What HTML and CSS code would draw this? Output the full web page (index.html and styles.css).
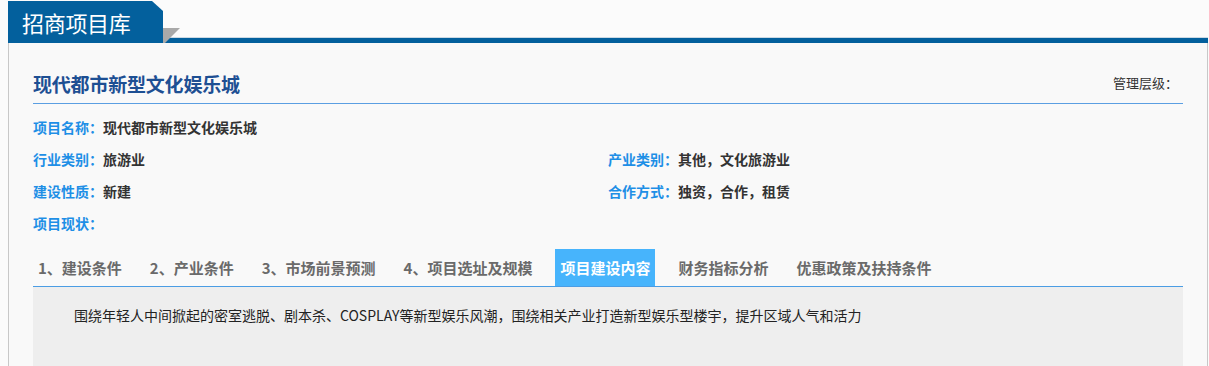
FILE: index.html
```html
<!DOCTYPE html>
<html lang="zh-CN">
<head>
<meta charset="utf-8">
<title>招商项目库</title>
<link rel="stylesheet" href="styles.css">
</head>
<body>
<div class="header">
  <div class="header-tab">招商项目库</div>
  <div class="header-line"></div>
  <svg class="header-fold" width="18" height="16" viewBox="0 0 18 16"><polygon points="0,1 17,1 2,16 0,16" fill="#a9a9a9"/></svg>
</div>
<div class="panel">
  <div class="title-row">
    <h1 class="title">现代都市新型文化娱乐城</h1>
    <span class="level">管理层级：</span>
  </div>
  <div class="info">
    <div class="field full"><span class="label">项目名称：</span><span class="value">现代都市新型文化娱乐城</span></div>
    <div class="field"><span class="label">行业类别：</span><span class="value">旅游业</span></div>
    <div class="field"><span class="label">产业类别：</span><span class="value">其他，文化旅游业</span></div>
    <div class="field"><span class="label">建设性质：</span><span class="value">新建</span></div>
    <div class="field"><span class="label">合作方式：</span><span class="value">独资，合作，租赁</span></div>
    <div class="field full"><span class="label">项目现状：</span><span class="value"></span></div>
  </div>
  <div class="tabs">
    <span class="tab">1、建设条件</span>
    <span class="tab">2、产业条件</span>
    <span class="tab">3、市场前景预测</span>
    <span class="tab">4、项目选址及规模</span>
    <span class="tab active">项目建设内容</span>
    <span class="tab">财务指标分析</span>
    <span class="tab">优惠政策及扶持条件</span>
  </div>
  <div class="content">围绕年轻人中间掀起的密室逃脱、剧本杀、COSPLAY等新型娱乐风潮，围绕相关产业打造新型娱乐型楼宇，提升区域人气和活力</div>
</div>
</body>
</html>
```

FILE: styles.css
```css
html, body {
  margin: 0;
  padding: 0;
  height: 100%;
}
body {
  box-sizing: border-box;
  display: flex;
  flex-direction: column;
  background: #fbfbfb;
  padding: 1px 1px 0 8px;
  font-family: "Noto Sans CJK SC", "Microsoft YaHei", sans-serif;
  color: #333;
  overflow: hidden;
}
.header {
  position: relative;
  display: flex;
  align-items: flex-end;
  height: 42px;
  flex: none;
}
.header-tab {
  width: 141px;
  height: 42px;
  padding-left: 14px;
  background: #03609d;
  color: #fff;
  font-size: 22px;
  line-height: 42px;
  letter-spacing: -0.3px;
  clip-path: polygon(0 0, 144px 0, 155px 10px, 155px 100%, 0 100%);
}
.header-line {
  flex: 1;
  height: 5px;
  background: #03609d;
  border-top: 1px solid #ccd9e3;
}
.header-fold {
  position: absolute;
  left: 155px;
  top: 26px;
}
.panel {
  flex: 1;
  display: flex;
  flex-direction: column;
  background: #f9f9f9;
  border-left: 1px solid #c8c8c8;
  border-right: 1px solid #c8c8c8;
  padding: 21px 24px 0;
}
.title-row {
  display: flex;
  align-items: center;
  justify-content: space-between;
  height: 39px;
  flex: none;
  border-bottom: 1px solid #5b9fe2;
}
.title {
  margin: 0;
  font-size: 19px;
  font-weight: bold;
  color: #1d4f93;
  line-height: 24px;
  letter-spacing: -0.2px;
}
.level {
  font-size: 13px;
  color: #333;
  margin-right: 5px;
  margin-top: -2px;
}
.info {
  margin-top: 7px;
  display: grid;
  grid-template-columns: 1fr 1fr;
}
.field {
  height: 32px;
  line-height: 32px;
  font-size: 14px;
  font-weight: bold;
  white-space: nowrap;
}
.field.full {
  grid-column: 1 / 3;
}
.label {
  color: #1e8fe6;
}
.value {
  color: #333;
}
.tabs {
  margin-top: 10px;
  display: flex;
  height: 37px;
  flex: none;
  border-bottom: 1px solid #4b9de4;
}
.tab {
  padding: 0 5px;
  margin-right: 18px;
  font-size: 15px;
  font-weight: bold;
  color: #6a6a6a;
  line-height: 37px;
  white-space: nowrap;
}
.tab.active {
  background: #47b4fc;
  color: #fff;
}
.content {
  flex: 1;
  background: #eeeeee;
  padding: 16px 41px;
  font-size: 14px;
  line-height: 24px;
  color: #222;
}
```
